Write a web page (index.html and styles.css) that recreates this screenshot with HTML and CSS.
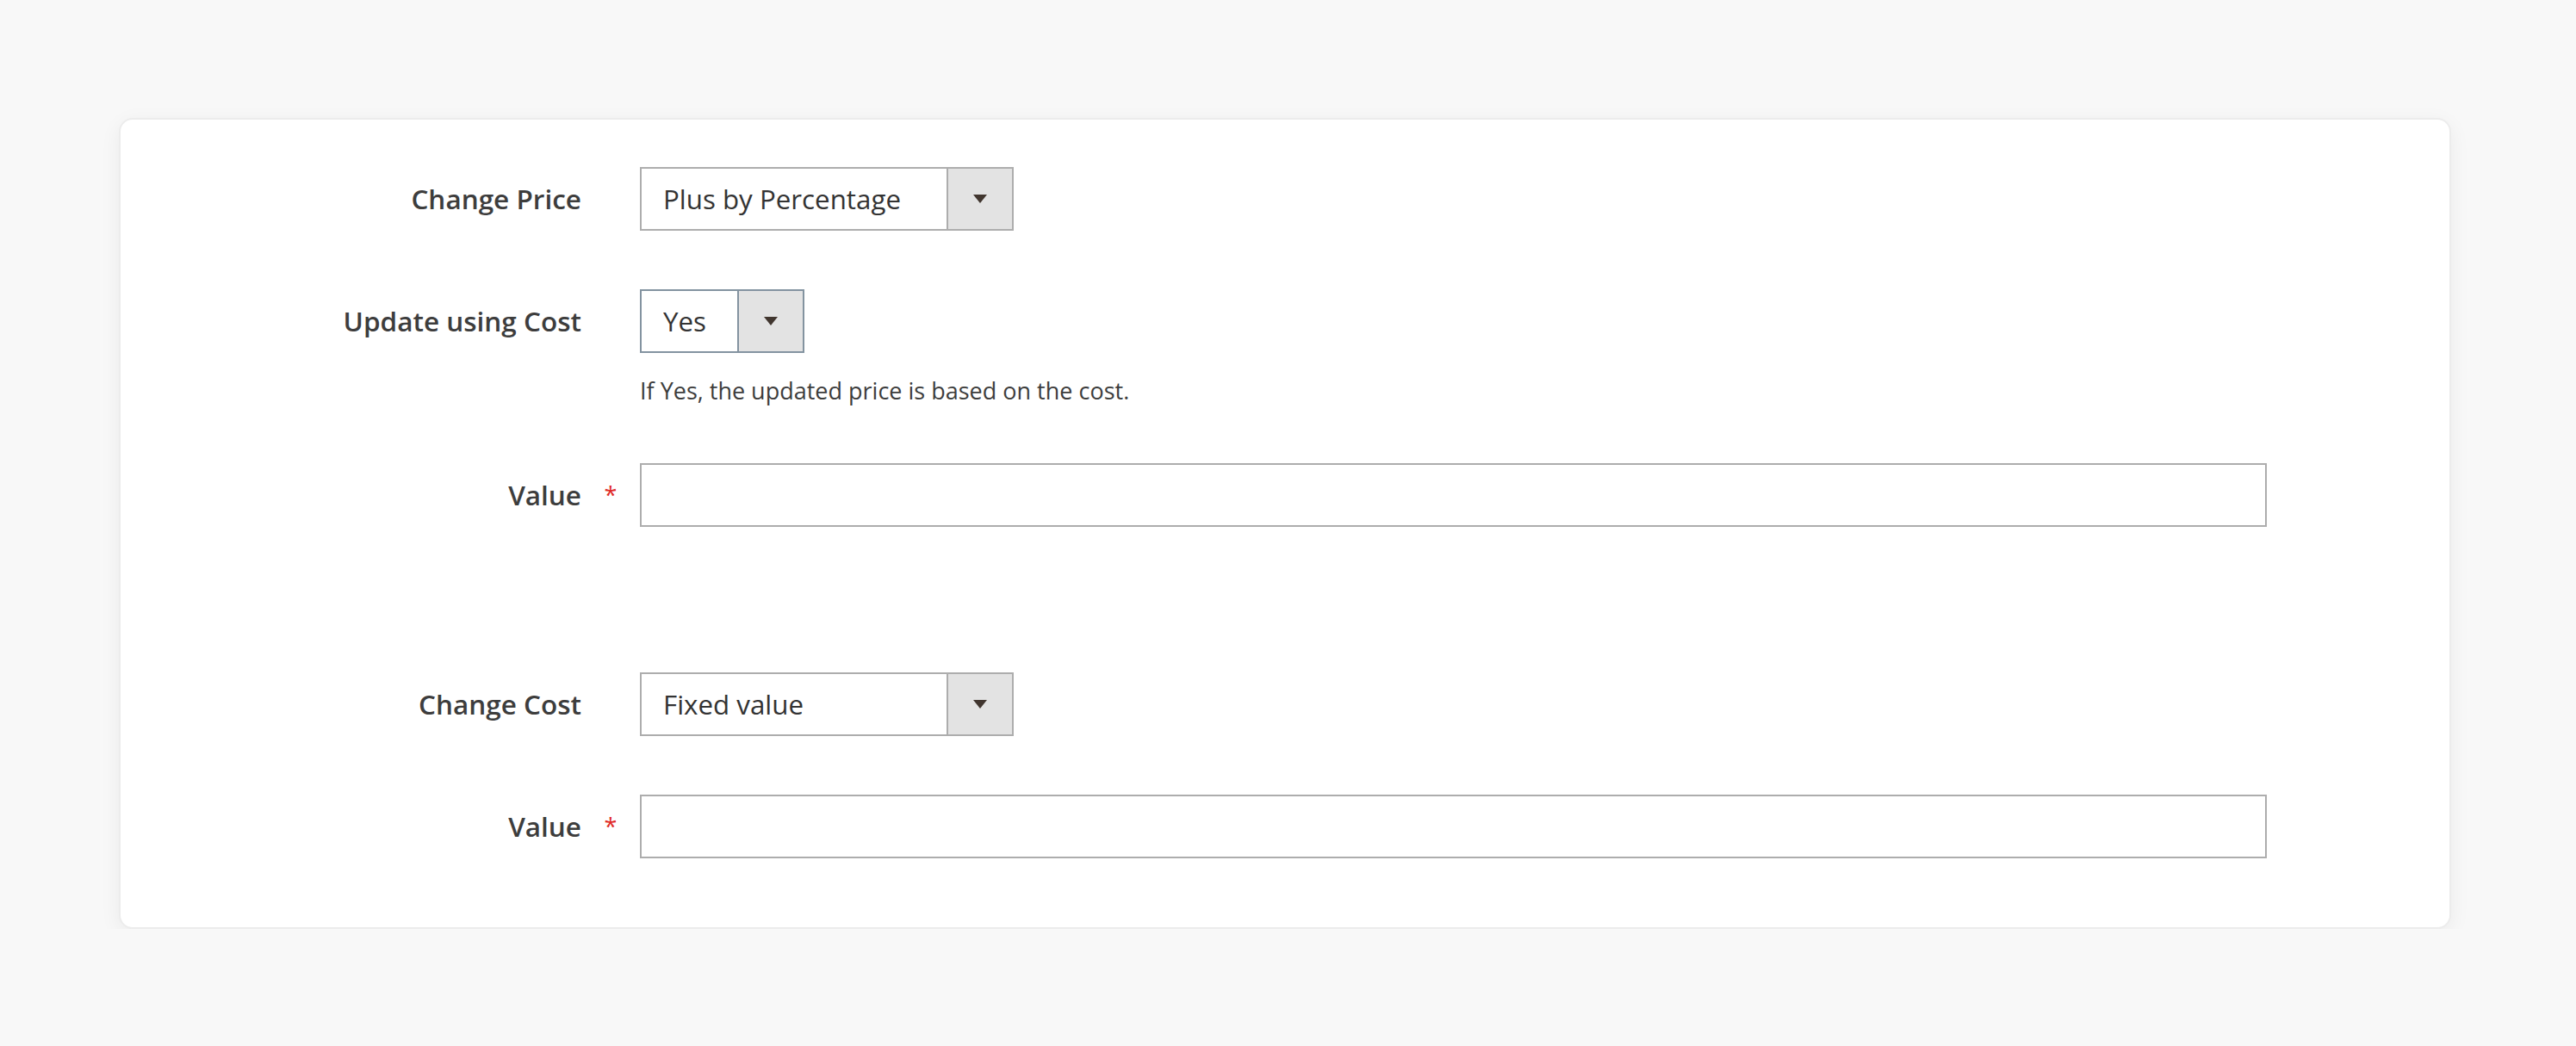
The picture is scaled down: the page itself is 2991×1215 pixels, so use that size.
FILE: index.html
```html
<!DOCTYPE html>
<html lang="en">
<head>
    <meta charset="UTF-8">
    <title>Update Attributes - Price</title>
    <link rel="stylesheet" href="styles.css">
</head>
<body>
    <div class="card">
        <div class="fieldset">
            <div class="field">
                <label class="field-label" for="change_price">Change Price</label>
                <span class="field-mark"></span>
                <div class="field-control">
                    <div class="select select-wide">
                        <select id="change_price">
                            <option>Plus by Percentage</option>
                            <option>Fixed value</option>
                        </select>
                        <span class="select-arrow"></span>
                    </div>
                </div>
            </div>

            <div class="field">
                <label class="field-label" for="use_cost">Update using Cost</label>
                <span class="field-mark"></span>
                <div class="field-control">
                    <div class="select select-small active">
                        <select id="use_cost">
                            <option>Yes</option>
                            <option>No</option>
                        </select>
                        <span class="select-arrow"></span>
                    </div>
                    <div class="field-note">If Yes, the updated price is based on the cost.</div>
                </div>
            </div>

            <div class="field">
                <label class="field-label" for="price_value">Value</label>
                <span class="field-mark">*</span>
                <div class="field-control">
                    <input type="text" class="input-text" id="price_value">
                </div>
            </div>
        </div>

        <div class="fieldset">
            <div class="field">
                <label class="field-label" for="change_cost">Change Cost</label>
                <span class="field-mark"></span>
                <div class="field-control">
                    <div class="select select-wide">
                        <select id="change_cost">
                            <option>Fixed value</option>
                            <option>Plus by Percentage</option>
                        </select>
                        <span class="select-arrow"></span>
                    </div>
                </div>
            </div>

            <div class="field">
                <label class="field-label" for="cost_value">Value</label>
                <span class="field-mark">*</span>
                <div class="field-control">
                    <input type="text" class="input-text" id="cost_value">
                </div>
            </div>
        </div>
    </div>
</body>
</html>
```

FILE: styles.css
```css
body {
    margin: 0;
    background-color: #f8f8f8;
    font-family: "Open Sans", "Noto Sans", sans-serif;
    color: #303030;
    padding: 137px 0 0 138px;
}
.card {
    box-sizing: border-box;
    width: 2708px;
    background: #fff;
    border: 2px solid #ececec;
    border-radius: 16px;
    box-shadow: 0 6px 24px rgba(0, 0, 0, 0.06);
    padding: 55px 0 80px 0;
}
.fieldset + .fieldset {
    margin-top: 169px;
}
.field {
    display: grid;
    grid-template-columns: 535px 68px 1889px;
    align-items: start;
}
.field + .field {
    margin-top: 68px;
}
.field-label {
    text-align: right;
    font-size: 31.5px;
    font-weight: 600;
    line-height: 74px;
    color: #3d3d3d;
}
.field-mark {
    text-align: center;
    color: #e02b27;
    font-size: 27px;
    line-height: 74px;
}
.field-note {
    margin-top: 27px;
    font-size: 27px;
    line-height: 33px;
    color: #3d3d3d;
}
.select {
    box-sizing: border-box;
    display: flex;
    height: 74px;
    border: 2px solid #adadad;
    background: #fff;
}
.select-wide {
    width: 434px;
}
.select-small {
    width: 191px;
}
.select.active {
    border-color: #8393a0;
}
.select select {
    flex: 1;
    min-width: 0;
    appearance: none;
    -webkit-appearance: none;
    border: 0;
    background: transparent;
    margin: 0;
    padding: 0 0 0 25px;
    font-family: "Open Sans", "Noto Sans", sans-serif;
    font-size: 31.3px;
    color: #333;
    outline: none;
}
.select-arrow {
    width: 74px;
    flex: none;
    background: #e3e3e3;
    border-left: 2px solid #adadad;
    display: flex;
    align-items: center;
    justify-content: center;
}
.select.active .select-arrow {
    border-left-color: #8393a0;
}
.select-arrow::before {
    content: "";
    border-left: 8px solid transparent;
    border-right: 8px solid transparent;
    border-top: 10px solid #41362f;
}
.input-text {
    box-sizing: border-box;
    display: block;
    width: 1889px;
    height: 74px;
    margin: 0;
    border: 2px solid #adadad;
    background: #fff;
    padding: 0 25px;
    font-family: "Open Sans", "Noto Sans", sans-serif;
    font-size: 31.3px;
    outline: none;
}
```
